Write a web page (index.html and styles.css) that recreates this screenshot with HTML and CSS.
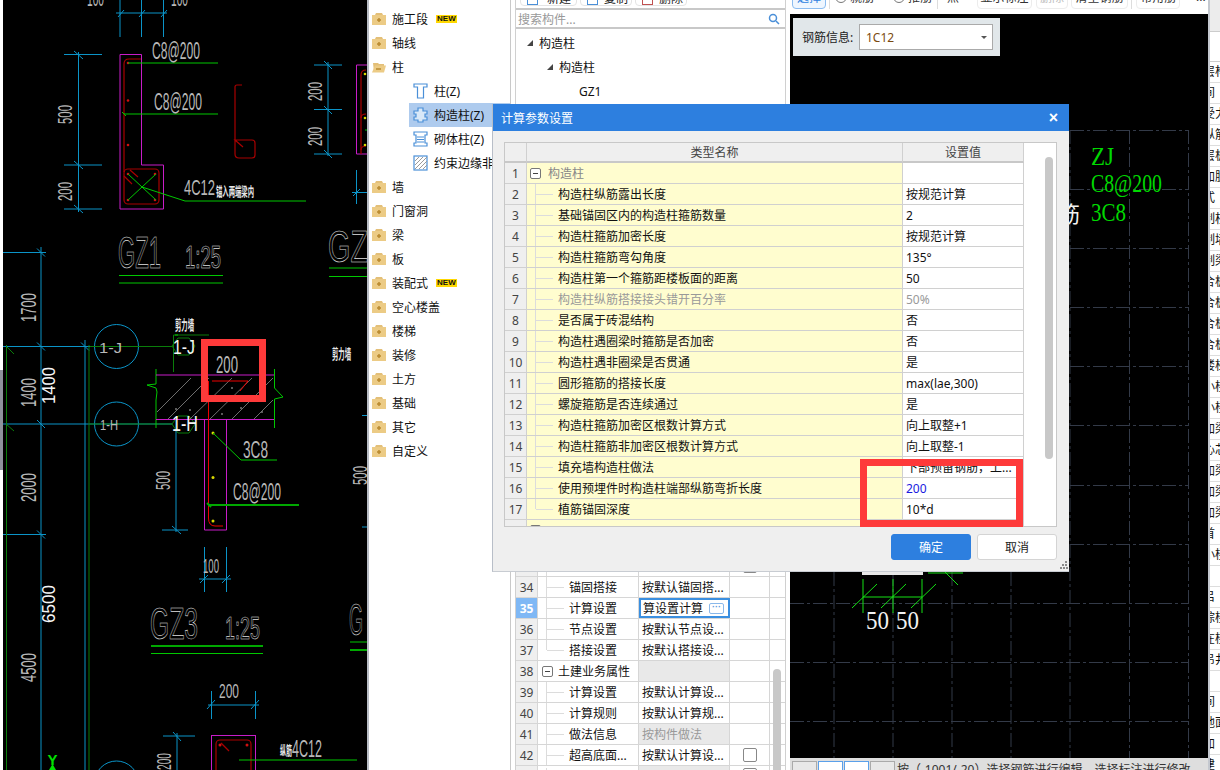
FILE: index.html
```html
<!DOCTYPE html>
<html lang="zh">
<head>
<meta charset="utf-8">
<title>计算参数设置</title>
<link rel="stylesheet" href="styles.css">
</head>
<body>
<div class="app">
  <div class="edge"><div class="edge-mark"></div></div>
  <div class="cad-left">
    <svg class="cad-svg" viewBox="3 0 364 770" width="364" height="770" xmlns="http://www.w3.org/2000/svg">
      <!-- long axis lines -->
      <g class="l-blue">
        <path d="M41 247V770M85 340V770"/>
        <path d="M3 252.500H46M3 346.500H94M3 424H172M3 534.500H46"/>
        <path d="M37 248.500L45 256.500M37 342.500L45 350.500M37 420L45 428M37 530.500L45 538.500M81 342.500L89 350.500"/>
        <circle cx="116.500" cy="346.500" r="22"/>
        <circle cx="116.500" cy="424" r="22"/>
        <circle cx="116.500" cy="783" r="22"/>
      </g>
      <path class="l-dgreen" d="M6.500 345V770M89 345V770M90 346.500H172M90 424H172M173.500 335V372M173.500 335H209"/>
      <path class="l-dgreen" d="M6 346L14 354M6 424L14 431M178 338l11 0 6 8-6 9h-11l-6-9zM178 416l11 0 6 8-6 9h-11l-6-9z"/>
      <!-- GZ1 detail -->
      <g class="l-blue">
        <path d="M120 0V37M141.500 0V37M163.500 0V37M116 13H167M118 17L124 10M139 17L145 10M161 17L167 10"/>
        <path d="M78.500 52V212M64 54.500H102M64 165H102M64 209H102M74 51L83 59M74 161L83 169M74 205L83 213"/>
        <path d="M328 62V156M314 65H342M314 109.500H342M314 154H342M324 61L332 69M324 106L332 114M324 150L332 158"/>
        <path d="M356.500 170V204M352 192.500H367M353 196L360 189"/>
      </g>
      <path class="l-mag" d="M120 54.500H141.500V165H163.500V209H120ZM367 65H356.500V154H367"/>
      <g class="l-dred">
        <path d="M124 172V64Q124 59 129 59H141"/>
        <rect x="124" y="169" width="35" height="35" rx="4"/>
        <path d="M130 170L138 177M124 176L132 184M361 154V75Q361 70 366 70"/>
        <path d="M242 85H237Q235 85 235 87V154Q235 158 239 158H252Q255 158 255 155V143Q255 140 252 140H235L243 147"/>
        <path d="M361 118Q361 114 366 114M361 150Q361 146 366 146"/>
      </g>
      <g class="dot-red">
        <circle cx="128" cy="63" r="1.300"/><circle cx="128" cy="100.500" r="1.300"/><circle cx="128" cy="145" r="1.300"/>
        <circle cx="128" cy="174" r="1.300"/><circle cx="155" cy="174" r="1.300"/><circle cx="128" cy="200" r="1.300"/><circle cx="155" cy="200" r="1.300"/>
      </g>
      <path class="l-green" d="M128 63H218M124 114H218M122 112L126 116M128 174L156 200M156 174L128 200M142 187L185 201H306"/>
      <path class="l-green" d="M119 275.500H223M119 283H223M329 268H367M329 276.500H367M365 130H367M175 335H178"/>
      <g class="dot-yel"><circle cx="365" cy="74" r="1.300"/><circle cx="365" cy="118" r="1.300"/><circle cx="365" cy="145" r="1.300"/></g>
      <!-- wall -->
      <g class="l-hatch">
        <path d="M157 412L191 378M168 419L209 378M190 419L232 378M210 419L252 378M232 419L273 378M254 419L273 400"/>
      </g>
      <g class="dot-gray">
        <circle cx="176" cy="409" r="1"/><circle cx="190" cy="410" r="1"/><circle cx="232" cy="388" r="1"/><circle cx="241" cy="408" r="1"/><circle cx="255" cy="396" r="1"/><circle cx="222" cy="414" r="1"/><circle cx="262" cy="412" r="1"/>
      </g>
      <path class="l-green" d="M156 369V384L147 385 156 388 157 392 156 400V428M274.500 369V388L283 397 274.500 399V428"/>
      <path class="l-mag" d="M156 375H274M156 419.500H274"/>
      <path class="l-red" d="M208.500 381V518Q208.500 526 215 526H223M212 381H248L240 391"/>
      <path class="l-mag2" d="M204.500 420V530H226.500V420"/>
      <g class="dot-yel"><circle cx="213" cy="433" r="1.500"/><circle cx="213" cy="477.500" r="1.500"/><circle cx="213" cy="521" r="1.500"/></g>
      <path class="l-green" d="M213 433L241 460H277"/>
      <path class="l-green2" d="M208 505H299M207 503L211 507"/>
      <g class="l-blue">
        <path d="M176 420V532M162 530H188M172 526L181 534"/>
        <path d="M204.500 547V592M226.500 547V592M199 579H231M200 583L208 575M222 583L230 575"/>
        <path d="M211.500 691V719M255.500 691V719M208 705H259M207 709L215 700M251 709L259 700"/>
        <path d="M177 733V770M163 736H195M173 732L181 741"/>
        <path d="M362 415.500H367M362 527H367"/>
      </g>
      <path class="l-green2" d="M151 646H263"/>
      <path class="l-green" d="M151 653.500H263M350 642H367"/>
      <path class="l-green2" d="M350 650H367"/>
      <rect class="l-mag" x="211.500" y="735.500" width="44" height="50"/>
      <g class="l-dred">
        <rect x="216" y="740" width="35" height="40" rx="4"/>
        <path d="M221 743L229 751"/>
      </g>
      <g class="dot-red"><circle cx="220" cy="745" r="1.500"/><circle cx="247" cy="745" r="1.500"/></g>
      <path class="l-green" d="M239 760H357"/>
      <!-- texts -->
      <g class="cad-text">
        <text x="87" y="6" font-size="22" textLength="17" lengthAdjust="spacingAndGlyphs">100</text>
        <text x="171" y="6" font-size="22" textLength="17" lengthAdjust="spacingAndGlyphs">100</text>
        <text x="152" y="59" font-size="23" textLength="48" lengthAdjust="spacingAndGlyphs">C8@200</text>
        <text x="154" y="110" font-size="23" textLength="48" lengthAdjust="spacingAndGlyphs">C8@200</text>
        <text x="184" y="195" font-size="22" textLength="31" lengthAdjust="spacingAndGlyphs">4C12</text>
        <text x="72" y="124" transform="rotate(-90 72 124)" font-size="21" textLength="19" lengthAdjust="spacingAndGlyphs">500</text>
        <text x="72" y="201" transform="rotate(-90 72 201)" font-size="21" textLength="19" lengthAdjust="spacingAndGlyphs">200</text>
        <text x="322" y="101" transform="rotate(-90 322 101)" font-size="21" textLength="19" lengthAdjust="spacingAndGlyphs">200</text>
        <text x="322" y="146" transform="rotate(-90 322 146)" font-size="21" textLength="19" lengthAdjust="spacingAndGlyphs">200</text>
        <text class="hollow" x="118" y="268" font-size="44" textLength="43" lengthAdjust="spacingAndGlyphs">GZ1</text>
        <text class="hollow" x="185" y="268" font-size="32" textLength="36" lengthAdjust="spacingAndGlyphs">1:25</text>
        <text class="hollow" x="328" y="262" font-size="44" textLength="40" lengthAdjust="spacingAndGlyphs">GZ</text>
        <text x="36" y="322" transform="rotate(-90 36 322)" font-size="22" textLength="29" lengthAdjust="spacingAndGlyphs">1700</text>
        <text x="36" y="407" transform="rotate(-90 36 407)" font-size="22" textLength="29" lengthAdjust="spacingAndGlyphs">1400</text>
        <text x="36" y="502" transform="rotate(-90 36 502)" font-size="22" textLength="29" lengthAdjust="spacingAndGlyphs">2000</text>
        <text x="36" y="682" transform="rotate(-90 36 682)" font-size="22" textLength="29" lengthAdjust="spacingAndGlyphs">4500</text>
        <text class="strong" x="55" y="404" transform="rotate(-90 55 404)" font-size="19" textLength="37" lengthAdjust="spacingAndGlyphs">1400</text>
        <text class="strong" x="55" y="623" transform="rotate(-90 55 623)" font-size="19" textLength="38" lengthAdjust="spacingAndGlyphs">6500</text>
        <text x="99" y="353" font-size="15" textLength="23" lengthAdjust="spacingAndGlyphs">1-J</text>
        <text class="strong" x="173" y="354" font-size="20" textLength="22" lengthAdjust="spacingAndGlyphs">1-J</text>
        <text x="216" y="373" font-size="24" textLength="22" lengthAdjust="spacingAndGlyphs">200</text>
        <text x="100" y="430" font-size="14" textLength="18" lengthAdjust="spacingAndGlyphs">1-H</text>
        <text class="strong" x="172" y="431" font-size="22" textLength="26" lengthAdjust="spacingAndGlyphs">1-H</text>
        <text x="170" y="490" transform="rotate(-90 170 490)" font-size="21" textLength="19" lengthAdjust="spacingAndGlyphs">500</text>
        <text x="243" y="458" font-size="24" textLength="25" lengthAdjust="spacingAndGlyphs">3C8</text>
        <text x="233" y="500" font-size="23" textLength="48" lengthAdjust="spacingAndGlyphs">C8@200</text>
        <text x="203" y="573" font-size="21" textLength="16" lengthAdjust="spacingAndGlyphs">100</text>
        <text class="hollow" x="150" y="639" font-size="44" textLength="48" lengthAdjust="spacingAndGlyphs">GZ3</text>
        <text class="hollow" x="225" y="639" font-size="32" textLength="35" lengthAdjust="spacingAndGlyphs">1:25</text>
        <text x="219" y="698" font-size="21" textLength="20" lengthAdjust="spacingAndGlyphs">200</text>
        <text x="292" y="757" font-size="24" textLength="30" lengthAdjust="spacingAndGlyphs">4C12</text>
        <text x="367" y="485" transform="rotate(-90 367 485)" font-size="21" textLength="19" lengthAdjust="spacingAndGlyphs">500</text>
        <text x="171" y="770" transform="rotate(-90 171 770)" font-size="21" textLength="17" lengthAdjust="spacingAndGlyphs">200</text>
        <text class="hollow" x="349" y="635" font-size="44" textLength="14" lengthAdjust="spacingAndGlyphs">G</text>
      </g>
      <g class="cad-cjk">
        <text x="216" y="196" font-size="13" textLength="38" lengthAdjust="spacingAndGlyphs">锚入两端梁内</text>
        <text x="175" y="330" font-size="14" textLength="19" lengthAdjust="spacingAndGlyphs">剪力墙</text>
        <text x="332" y="359" font-size="14" textLength="19" lengthAdjust="spacingAndGlyphs">剪力墙</text>
        <text x="280" y="755" font-size="13" textLength="12" lengthAdjust="spacingAndGlyphs">纵筋</text>
      </g>
      <rect class="hl" x="204.500" y="342.500" width="58" height="56"/>
      <text class="axis-y" x="47.500" y="765" font-size="15">Y</text>
      <path class="axis-arrow" d="M52.500 764L56 770H49Z"/>
    </svg>
  </div>

  <aside class="tree">
    <div class="tree-row"><svg class="folder" viewBox="0 0 14 12"><path class="f-tab" d="M4 0h6l1 2H3z"/><rect class="f-body" y="2" width="14" height="10"/><path class="f-plus" d="M5 7h4M7 5v4"/></svg><span>施工段</span><span class="new">NEW</span></div>
    <div class="tree-row"><svg class="folder" viewBox="0 0 14 12"><path class="f-tab" d="M4 0h6l1 2H3z"/><rect class="f-body" y="2" width="14" height="10"/><path class="f-plus" d="M5 7h4M7 5v4"/></svg><span>轴线</span></div>
    <div class="tree-row"><svg class="folder" viewBox="0 0 14 12"><path class="f-open" d="M1 2h5l1 1h5v2H4l-2 6z"/><path class="f-body" d="M3 4.500h11l-2 7H0z"/><path class="f-plus" d="M4 8h5"/></svg><span>柱</span></div>
    <div class="tree-row child"><svg class="cicon" viewBox="0 0 15 16"><path class="c-line" d="M1 1h13v3h-3.500v11h-6V4H1z"/></svg><span>柱(Z)</span></div>
    <div class="tree-row child selected"><svg class="cicon" viewBox="0 0 15 16"><path class="c-line2" d="M5 1h5v3h4v3h-2v3h2v3h-4v2H5v-2H1v-3h2V7H1V4h4z"/></svg><span>构造柱(Z)</span></div>
    <div class="tree-row child"><svg class="cicon" viewBox="0 0 15 16"><path class="c-line" d="M1 1h13v3h-2v8h2v3H1v-3h2V4H1z"/><path class="c-line" d="M4 6h7M4 8.500h7M4 11h7"/></svg><span>砌体柱(Z)</span></div>
    <div class="tree-row child"><svg class="cicon" viewBox="0 0 15 16"><rect class="c-box" x="1" y="1" width="13" height="14"/><path class="c-hatch" d="M2 6L6 2M2 10L10 2M2 14L14 2M6 14L14 6M10 14L14 10"/></svg><span>约束边缘非</span></div>
    <div class="tree-row"><svg class="folder" viewBox="0 0 14 12"><path class="f-tab" d="M4 0h6l1 2H3z"/><rect class="f-body" y="2" width="14" height="10"/><path class="f-plus" d="M5 7h4M7 5v4"/></svg><span>墙</span></div>
    <div class="tree-row"><svg class="folder" viewBox="0 0 14 12"><path class="f-tab" d="M4 0h6l1 2H3z"/><rect class="f-body" y="2" width="14" height="10"/><path class="f-plus" d="M5 7h4M7 5v4"/></svg><span>门窗洞</span></div>
    <div class="tree-row"><svg class="folder" viewBox="0 0 14 12"><path class="f-tab" d="M4 0h6l1 2H3z"/><rect class="f-body" y="2" width="14" height="10"/><path class="f-plus" d="M5 7h4M7 5v4"/></svg><span>梁</span></div>
    <div class="tree-row"><svg class="folder" viewBox="0 0 14 12"><path class="f-tab" d="M4 0h6l1 2H3z"/><rect class="f-body" y="2" width="14" height="10"/><path class="f-plus" d="M5 7h4M7 5v4"/></svg><span>板</span></div>
    <div class="tree-row"><svg class="folder" viewBox="0 0 14 12"><path class="f-tab" d="M4 0h6l1 2H3z"/><rect class="f-body" y="2" width="14" height="10"/><path class="f-plus" d="M5 7h4M7 5v4"/></svg><span>装配式</span><span class="new">NEW</span></div>
    <div class="tree-row"><svg class="folder" viewBox="0 0 14 12"><path class="f-tab" d="M4 0h6l1 2H3z"/><rect class="f-body" y="2" width="14" height="10"/><path class="f-plus" d="M5 7h4M7 5v4"/></svg><span>空心楼盖</span></div>
    <div class="tree-row"><svg class="folder" viewBox="0 0 14 12"><path class="f-tab" d="M4 0h6l1 2H3z"/><rect class="f-body" y="2" width="14" height="10"/><path class="f-plus" d="M5 7h4M7 5v4"/></svg><span>楼梯</span></div>
    <div class="tree-row"><svg class="folder" viewBox="0 0 14 12"><path class="f-tab" d="M4 0h6l1 2H3z"/><rect class="f-body" y="2" width="14" height="10"/><path class="f-plus" d="M5 7h4M7 5v4"/></svg><span>装修</span></div>
    <div class="tree-row"><svg class="folder" viewBox="0 0 14 12"><path class="f-tab" d="M4 0h6l1 2H3z"/><rect class="f-body" y="2" width="14" height="10"/><path class="f-plus" d="M5 7h4M7 5v4"/></svg><span>土方</span></div>
    <div class="tree-row"><svg class="folder" viewBox="0 0 14 12"><path class="f-tab" d="M4 0h6l1 2H3z"/><rect class="f-body" y="2" width="14" height="10"/><path class="f-plus" d="M5 7h4M7 5v4"/></svg><span>基础</span></div>
    <div class="tree-row"><svg class="folder" viewBox="0 0 14 12"><path class="f-tab" d="M4 0h6l1 2H3z"/><rect class="f-body" y="2" width="14" height="10"/><path class="f-plus" d="M5 7h4M7 5v4"/></svg><span>其它</span></div>
    <div class="tree-row"><svg class="folder" viewBox="0 0 14 12"><path class="f-tab" d="M4 0h6l1 2H3z"/><rect class="f-body" y="2" width="14" height="10"/><path class="f-plus" d="M5 7h4M7 5v4"/></svg><span>自定义</span></div>
  </aside>

  <section class="mid">
    <div class="mid-tools">
      <span class="mid-btn first"><i class="mid-ico"></i>新建</span>
      <span class="mid-btn"><i class="mid-ico"></i>复制</span>
      <span class="mid-btn"><i class="mid-ico red"></i>删除</span>
    </div>
    <div class="search">
      <span>搜索构件...</span>
      <svg class="glass" viewBox="0 0 12 12"><circle cx="5" cy="5" r="3.500"/><path d="M8 8l3 3"/></svg>
    </div>
    <div class="comp-tree">
      <div class="comp-row"><i class="tri"></i>构造柱</div>
      <div class="comp-row lv2"><i class="tri"></i>构造柱</div>
      <div class="comp-row lv3">GZ1</div>
    </div>
    <div class="props">
      <div class="p-row"><span class="p-no">33</span><span class="p-name"><i class="tv"></i><i class="th"></i>钢筋业务</span><span class="p-val">按默认计算设...</span><span class="p-chk"><i class="chk"></i></span></div>
      <div class="p-row"><span class="p-no">34</span><span class="p-name"><i class="tv"></i><i class="th"></i>锚固搭接</span><span class="p-val">按默认锚固搭...</span><span class="p-chk"></span></div>
      <div class="p-row"><span class="p-no active">35</span><span class="p-name"><i class="tv"></i><i class="th"></i>计算设置</span><span class="p-val edit">算设置计算<i class="more">···</i></span><span class="p-chk"></span></div>
      <div class="p-row"><span class="p-no">36</span><span class="p-name"><i class="tv"></i><i class="th"></i>节点设置</span><span class="p-val">按默认节点设...</span><span class="p-chk"></span></div>
      <div class="p-row"><span class="p-no">37</span><span class="p-name"><i class="tv end"></i><i class="th"></i>搭接设置</span><span class="p-val">按默认搭接设...</span><span class="p-chk"></span></div>
      <div class="p-row"><span class="p-no">38</span><span class="p-name group"><i class="minus"></i>土建业务属性</span><span class="p-val gray"></span><span class="p-chk"></span></div>
      <div class="p-row"><span class="p-no">39</span><span class="p-name"><i class="tv"></i><i class="th"></i>计算设置</span><span class="p-val">按默认计算设...</span><span class="p-chk"></span></div>
      <div class="p-row"><span class="p-no">40</span><span class="p-name"><i class="tv"></i><i class="th"></i>计算规则</span><span class="p-val">按默认计算规...</span><span class="p-chk"></span></div>
      <div class="p-row"><span class="p-no">41</span><span class="p-name"><i class="tv"></i><i class="th"></i>做法信息</span><span class="p-val gray muted">按构件做法</span><span class="p-chk"></span></div>
      <div class="p-row"><span class="p-no">42</span><span class="p-name"><i class="tv"></i><i class="th"></i>超高底面...</span><span class="p-val">按默认计算设...</span><span class="p-chk"><i class="chk"></i></span></div>
      <div class="p-row last"><span class="p-no"></span><span class="p-name"><i class="tv"></i></span><span class="p-val gray"></span><span class="p-chk"><i class="chk"></i></span></div>
      <i class="p-scroll"></i>
    </div>
  </section>

  <section class="right">
    <div class="r-tools">
      <span class="rb primary">选择</span>
      <i class="vsep"></i>
      <span class="radio a"><i></i>就筋</span>
      <span class="radio b"><i></i>推筋</span>
      <i class="vsep"></i>
      <span class="rb input">点</span>
      <span class="rb wide">显示标注</span>
      <span class="rb off">删除</span>
      <span class="rb clear">清空钢筋</span>
      <i class="vsep"></i>
      <span class="rb corner">布角筋</span>
      <span class="dots">···</span>
    </div>
    <div class="canvas">
      <svg class="grid-svg" viewBox="790 14 418 744" width="418" height="744" xmlns="http://www.w3.org/2000/svg">
        <path class="grid" d="M1070 130V758M1129.500 130V758M1188.500 130V758M834 572V758M893 572V758M952 572V758M1011 572V758"/>
        <path class="grid" d="M1070 130.500H1189M1070 189.500H1189M1070 248.500H1189M1070 307.500H1189M1070 366.500H1189M1070 425.500H1189M1070 485.500H1189M1070 544.500H1189M790 603.500H1189M790 662.500H1189M790 721.500H1189"/>
        <text class="green-t" x="1091" y="165" font-size="25" textLength="23" lengthAdjust="spacingAndGlyphs">ZJ</text>
        <text class="green-t" x="1091" y="192" font-size="25" textLength="71" lengthAdjust="spacingAndGlyphs">C8@200</text>
        <text class="green-t" x="1091" y="221" font-size="25" textLength="35" lengthAdjust="spacingAndGlyphs">3C8</text>
        <text class="white-cjk" x="1058" y="222" font-size="22">筋</text>
        <text class="white-t" x="866" y="629" font-size="25" textLength="23" lengthAdjust="spacingAndGlyphs">50</text>
        <text class="white-t" x="896" y="629" font-size="25" textLength="23" lengthAdjust="spacingAndGlyphs">50</text>
        <path class="l-bright" d="M863 579V613M893 579V613M922 579V613M863 597H922M852 608L877 584M881 608L906 584M911 608L936 584M928 573H963M945 572L958 585"/>
        <rect class="stub" x="862" y="570" width="61" height="5"/>
      </svg>
      <div class="rebar-info">
        <span>钢筋信息:</span>
        <div class="select"><span>1C12</span><i class="caret"></i></div>
      </div>
    </div>
    <div class="status">
      <span class="st-btn"></span><span class="st-btn on"></span><span class="st-btn on"></span><span class="st-btn"></span>
      <span class="st-text">按（-1001/-20）选择钢筋进行编辑，选择标注进行修改</span>
    </div>
  </section>

  <aside class="side">
    <div class="side-top"></div>
    <div class="side-gap"></div>
    <div class="s-row">层构</div><div class="s-row">间</div><div class="s-row">受力</div><div class="s-row">纵筋</div><div class="s-row">层板</div><div class="s-row">加脱</div><div class="s-row">式</div><div class="s-row">制柱</div><div class="s-row">制墙</div><div class="s-row">制梁</div><div class="s-row">合板</div><div class="s-row">合板</div><div class="s-row">合板</div><div class="s-row">合板</div><div class="s-row">楼梯</div><div class="s-row">小楼</div><div class="s-row">小楼</div><div class="s-row">加梁</div><div class="s-row">心芯</div><div class="s-row">加梁</div><div class="s-row">加梁</div><div class="s-row">加梁</div><div class="s-row">首</div><div class="s-row">小楼</div><div class="s-row"></div><div class="s-row">吕</div><div class="s-row">综楼</div><div class="s-row">在楼</div><div class="s-row">吊井</div><div class="s-row"></div><div class="s-row">间</div><div class="s-row">地面</div><div class="s-row">加</div><div class="s-row">建</div>
  </aside>

  <div class="dialog">
    <header class="dlg-head"><span>计算参数设置</span><span class="dlg-x">×</span></header>
    <div class="dlg-table">
      <i class="dlg-scroll"></i>
      <div class="d-row head"><span class="d-no"></span><span class="d-name">类型名称</span><span class="d-val">设置值</span></div>
      <div class="d-row"><span class="d-no">1</span><span class="d-name group"><i class="minus"></i>构造柱</span><span class="d-val"></span></div>
      <div class="d-row"><span class="d-no">2</span><span class="d-name"><i class="tv"></i><i class="th"></i>构造柱纵筋露出长度</span><span class="d-val">按规范计算</span></div>
      <div class="d-row"><span class="d-no">3</span><span class="d-name"><i class="tv"></i><i class="th"></i>基础锚固区内的构造柱箍筋数量</span><span class="d-val">2</span></div>
      <div class="d-row"><span class="d-no">4</span><span class="d-name"><i class="tv"></i><i class="th"></i>构造柱箍筋加密长度</span><span class="d-val">按规范计算</span></div>
      <div class="d-row"><span class="d-no">5</span><span class="d-name"><i class="tv"></i><i class="th"></i>构造柱箍筋弯勾角度</span><span class="d-val">135°</span></div>
      <div class="d-row"><span class="d-no">6</span><span class="d-name"><i class="tv"></i><i class="th"></i>构造柱第一个箍筋距楼板面的距离</span><span class="d-val">50</span></div>
      <div class="d-row dim"><span class="d-no">7</span><span class="d-name"><i class="tv"></i><i class="th"></i>构造柱纵筋搭接接头错开百分率</span><span class="d-val">50%</span></div>
      <div class="d-row"><span class="d-no">8</span><span class="d-name"><i class="tv"></i><i class="th"></i>是否属于砖混结构</span><span class="d-val">否</span></div>
      <div class="d-row"><span class="d-no">9</span><span class="d-name"><i class="tv"></i><i class="th"></i>构造柱遇圈梁时箍筋是否加密</span><span class="d-val">否</span></div>
      <div class="d-row"><span class="d-no">10</span><span class="d-name"><i class="tv"></i><i class="th"></i>构造柱遇非圈梁是否贯通</span><span class="d-val">是</span></div>
      <div class="d-row"><span class="d-no">11</span><span class="d-name"><i class="tv"></i><i class="th"></i>圆形箍筋的搭接长度</span><span class="d-val">max(lae,300)</span></div>
      <div class="d-row"><span class="d-no">12</span><span class="d-name"><i class="tv"></i><i class="th"></i>螺旋箍筋是否连续通过</span><span class="d-val">是</span></div>
      <div class="d-row"><span class="d-no">13</span><span class="d-name"><i class="tv"></i><i class="th"></i>构造柱箍筋加密区根数计算方式</span><span class="d-val">向上取整+1</span></div>
      <div class="d-row"><span class="d-no">14</span><span class="d-name"><i class="tv"></i><i class="th"></i>构造柱箍筋非加密区根数计算方式</span><span class="d-val">向上取整-1</span></div>
      <div class="d-row"><span class="d-no">15</span><span class="d-name"><i class="tv"></i><i class="th"></i>填充墙构造柱做法</span><span class="d-val">下部预留钢筋，上...</span></div>
      <div class="d-row"><span class="d-no">16</span><span class="d-name"><i class="tv"></i><i class="th"></i>使用预埋件时构造柱端部纵筋弯折长度</span><span class="d-val blue">200</span></div>
      <div class="d-row"><span class="d-no">17</span><span class="d-name"><i class="tv end"></i><i class="th"></i>植筋锚固深度</span><span class="d-val">10*d</span></div>
      <div class="d-row"><span class="d-no"></span><span class="d-name group"><i class="minus"></i></span><span class="d-val"></span></div>
    </div>
    <div class="dlg-foot">
      <button class="btn ok">确定</button>
      <button class="btn">取消</button>
    </div>
    <svg class="grip" viewBox="0 0 8 8"><path d="M5 0h2v2H5zM2 3h2v2H2zM5 3h2v2H5zM0 6h2v2H0zM3 6h2v2H3zM6 6h2v2H6z"/></svg>
    <div class="callout"></div>
  </div>
</div>
</body>
</html>
```

FILE: styles.css
```css
* { box-sizing: border-box; }
html, body { margin: 0; height: 100%; overflow: hidden; }
body {
  font-family: "Noto Sans", "Noto Sans CJK SC", sans-serif;
  font-size: 12px;
  color: #111;
  background: #fff;
}
i { display: block; font-style: normal; }
.app { position: relative; display: flex; width: 1220px; height: 770px; overflow: hidden; }

/* left CAD drawing */
.edge { width: 3px; height: 770px; background: #fff; padding-top: 370px; flex: none; }
.edge-mark { height: 100px; background: #8e939c; }
.cad-left { width: 364px; height: 770px; background: #000; flex: none; overflow: hidden; }
.cad-svg { display: block; }
.cad-svg path, .cad-svg circle, .cad-svg rect { fill: none; }
.l-blue path, .l-blue circle { stroke: #0b94c8; stroke-width: 1; }
.l-dgreen { stroke: #0a7d0a; stroke-width: 1; }
.l-green { stroke: #00c800; stroke-width: 1; }
.l-green2 { stroke: #00a800; stroke-width: 2; }
.l-mag { stroke: #c81cc8; stroke-width: 1; }
.l-mag2 { stroke: #c81cc8; stroke-width: 1; }
.l-red { stroke: #ee0000; stroke-width: 1; }
.l-dred path, .l-dred rect { stroke: #a80000; stroke-width: 1.2; }
.l-hatch path { stroke: #8a8a8a; stroke-width: .8; }
.cad-svg .dot-red circle { fill: #d01010; }
.cad-svg .dot-yel circle { fill: #d8d800; }
.cad-svg .dot-gray circle { fill: #777; }
.cad-text text { font-family: "Liberation Sans", sans-serif; fill: #b8b8b8; font-weight: 400; }
.cad-text .strong { fill: #f5f5f5; }
.cad-text .hollow { fill: #000; stroke: #e0e0e0; stroke-width: .6; }
.cad-cjk text { font-family: "Noto Sans CJK SC", sans-serif; fill: #e8e8e8; font-weight: 700; }
.cad-svg .hl { stroke: #fe3a3a; stroke-width: 7; }
.axis-y { fill: #00e000; font-family: "Liberation Sans", sans-serif; font-weight: 700; }
.cad-svg .axis-arrow { fill: #00e000; }

/* element tree */
.tree {
  width: 144px; height: 770px; flex: none;
  padding-top: 7px;
  border-left: 2px solid #b8bcc4;
  border-right: 1px solid #c9c9c9;
  overflow: hidden;
}
.tree-row { display: flex; align-items: center; height: 24px; padding-left: 3px; white-space: nowrap; }
.tree-row.child { padding-left: 44px; }
.tree-row.selected { margin-left: 40px; padding-left: 4px; background: #aecbee; }
.folder { width: 14px; height: 12px; margin-right: 6px; flex: none; }
.f-tab { fill: #e3bf78; }
.f-body { fill: #eccb85; }
.f-open { fill: #e3bf78; }
.f-plus { stroke: #b98a2f; stroke-width: 1.500; fill: none; }
.cicon { width: 15px; height: 16px; margin-right: 6px; flex: none; }
.c-line { fill: none; stroke: #4a8fd8; stroke-width: 1.200; }
.c-line2 { fill: #d8e8f8; stroke: #4a8fd8; stroke-width: 1.200; }
.c-box { fill: #fff; stroke: #4a8fd8; stroke-width: 1.200; }
.c-hatch { fill: none; stroke: #9a9a9a; stroke-width: 1; }
.new {
  margin-left: 8px; padding: 0 1px; height: 8px;
  background: #ffd800; color: #111;
  font: 700 8px/8px "Liberation Sans", sans-serif;
}

/* middle column */
.mid {
  width: 271px; height: 770px; margin-left: 4px; flex: none;
  display: flex; flex-direction: column;
  border-left: 1px solid #d0d0d0;
  border-right: 1px solid #d0d0d0;
}
.mid-tools { height: 8px; flex: none; display: flex; align-items: flex-end; gap: 3px; padding: 0 0 2px 4px; overflow: hidden; }
.mid-btn { flex: none; width: 52px; display: flex; align-items: center; gap: 6px; height: 16px; padding: 0 6px; border: 1px solid #e4e4e4; border-radius: 4px; color: #222; white-space: nowrap; }
.mid-btn.first { width: 57px; gap: 9px; }
.mid-ico { width: 11px; height: 13px; border: 1px solid #4a8fd8; flex: none; }
.mid-ico.red { border-color: #c05050; }
.search {
  height: 21px; flex: none; display: flex; align-items: center; justify-content: space-between;
  padding: 0 5px 0 2px;
  border-top: 2px solid #c8c8c8; border-bottom: 2px solid #c8c8c8;
  color: #999; font-size: 12px;
}
.glass { width: 12px; height: 12px; }
.glass circle, .glass path { fill: none; stroke: #4a8fd8; stroke-width: 1.500; }
.comp-tree { flex: 1; padding-top: 2px; }
.comp-row { display: flex; align-items: center; height: 24px; padding-left: 11px; white-space: nowrap; gap: 6px; }
.comp-row.lv2 { padding-left: 31px; }
.comp-row.lv3 { padding-left: 63px; }
.tri { width: 0; height: 0; border-left: 6px solid transparent; border-bottom: 6px solid #444; }
.props { position: relative; flex: none; height: 214px; overflow: hidden; }
.p-row {
  display: grid; grid-template-columns: 22px 101px 91px 40px;
  height: 21px;
  border-bottom: 1px solid #d6d6d6;
}
.p-row > span { display: flex; align-items: center; white-space: nowrap; overflow: hidden; border-right: 1px solid #d6d6d6; }
.p-row.last > span { align-items: flex-start; padding-top: 2px; }
.p-no { justify-content: center; background: #efefef; color: #444; }
.p-no.active { background: #7fb8f5; color: #fff; font-weight: 700; }
.p-name { padding-left: 8px; }
.p-name.group { padding-left: 4px; gap: 5px; }
.p-val { padding-left: 3px; }
.p-val.gray { background: #e9e9e9; }
.p-val.muted { color: #999; }
.p-val.edit { border: 2px solid #3b8fe0; padding-left: 2px; gap: 6px; }
.p-chk { justify-content: center; }
.more { width: 15px; height: 11px; border: 1px solid #8ab8ea; border-radius: 2px; color: #5c9be0; font: 700 9px/7px "Liberation Sans", sans-serif; text-align: center; }
.chk { width: 14px; height: 14px; border: 1px solid #888; border-radius: 2px; background: #fff; }
.p-scroll { position: absolute; right: 4px; top: 113px; width: 8px; height: 110px; border-radius: 4px 4px 0 0; background: #c8c8c8; }
.tv { width: 1px; height: 100%; background: #dcdcdc; flex: none; }
.tv.end { height: 50%; align-self: flex-start; }
.th { width: 17px; height: 1px; background: #dcdcdc; margin-right: 5px; flex: none; }
.minus { position: relative; width: 11px; height: 11px; border: 1px solid #777; border-radius: 2px; flex: none; background: #fff; }
.minus::after { content: ""; position: absolute; left: 2px; top: 4px; width: 5px; height: 1px; background: #444; }

/* right drawing */
.right { width: 418px; height: 770px; margin-left: 4px; flex: none; display: flex; flex-direction: column; }
.r-tools {
  height: 14px; flex: none; display: flex; align-items: flex-end; overflow: hidden;
  padding: 0 0 5px 2px; background: #fff; color: #333;
}
.rb { flex: none; height: 24px; padding: 0; display: flex; align-items: center; justify-content: center; white-space: nowrap; border: 1px solid #ececec; border-radius: 4px; }
.rb.primary { width: 34px; border-color: #8bbcf0; color: #2d7fdf; background: #eef6ff; }
.rb.input { width: 24px; border: 0; }
.rb.wide { width: 55px; margin-left: 12px; }
.rb.off { width: 32px; color: #bbb; margin-left: 4px; }
.rb.clear { width: 57px; margin-left: 3px; }
.rb.corner { width: 44px; margin-left: 1px; }
.vsep { width: 1px; height: 24px; background: #ddd; margin: 0 3px; flex: none; }
.radio { flex: none; display: flex; align-items: center; gap: 3px; height: 24px; white-space: nowrap; }
.radio.a { margin: 0 19px 0 2px; }
.radio.b { margin-right: 2px; }
.radio i { width: 12px; height: 12px; border: 1px solid #777; border-radius: 50%; }
.dots { margin-left: 16px; }
.canvas { position: relative; flex: 1; background: #000; overflow: hidden; }
.grid-svg { display: block; }
.grid { stroke: #333a48; stroke-width: 1; stroke-dasharray: 14 3 3 3; fill: none; }
.green-t { font-family: "Liberation Serif", serif; fill: #00d800; }
.white-t { font-family: "Liberation Serif", serif; fill: #f2f2f2; }
.white-cjk { font-family: "Noto Sans CJK SC", sans-serif; fill: #f2f2f2; }
.l-bright { stroke: #14e014; stroke-width: 1; fill: none; }
.stub { fill: #e8e8e8; }
.rebar-info {
  position: absolute; left: 3px; top: 4px;
  width: 207px; height: 38px;
  display: flex; align-items: center; justify-content: space-between;
  padding: 0 7px 0 9px;
  background: #e1e7ea; color: #222;
}
.select { width: 134px; height: 26px; display: flex; align-items: center; justify-content: space-between; padding: 0 5px 0 6px; background: #fff; border: 1px solid #aaa; color: #7a4a10; }
.caret { width: 0; height: 0; border-left: 3px solid transparent; border-right: 3px solid transparent; border-top: 3px solid #555; }
.status { height: 12px; flex: none; display: flex; gap: 1px; padding-left: 2px; background: #dedede; overflow: hidden; }
.st-btn { width: 25px; height: 20px; margin-top: 3px; flex: none; border: 1px solid #aaa; background: #e8e8e8; }
.st-btn.on { background: #fff; border-color: #5aa0ea; }
.st-text { margin: 3px 0 0 1px; line-height: 18px; white-space: nowrap; color: #333; }

/* far right list */
.side { width: 12px; height: 770px; flex: none; border-left: 2px solid #c4c8cf; overflow: hidden; }
.side-top { height: 32px; background: #ececec; border-bottom: 1px solid #ccc; }
.side-gap { height: 30px; border-bottom: 1px solid #ccc; }
.s-row { width: 40px; height: 21px; margin-left: -7px; padding-top: 1px; line-height: 18px; border-bottom: 1px solid #ddd; white-space: nowrap; }

/* modal */
.dialog {
  position: absolute; left: 492px; top: 104px;
  width: 577px; height: 468px;
  display: flex; flex-direction: column;
  padding: 0 12px 0 11px;
  background: #efefef;
  border-left: 1px solid #b8bec8;
  border-bottom: 1px solid #c8ccd2;
}
.dlg-head {
  height: 27px; flex: none; margin: 0 -12px 0 -11px; padding: 0 11px 0 8px;
  display: flex; align-items: center; justify-content: space-between;
  background: #2d7fdf; color: #fff;
}
.dlg-x { font: 700 16px/16px "Liberation Sans", sans-serif; }
.dlg-table {
  position: relative; height: 385px; width: 553px; margin-top: 11px; flex: none;
  background: #fff; border: 1px solid #c8c8c8; overflow: hidden;
}
.dlg-scroll { position: absolute; right: 3px; top: 14px; width: 8px; height: 302px; border-radius: 4px; background: #c8c8c8; }
.d-row { display: grid; grid-template-columns: 22px 376px 121px; width: 519px; height: 21px; }
.d-row.head { height: 20px; }
.d-row > span { display: flex; align-items: center; white-space: nowrap; overflow: hidden; border-right: 1px solid #d0d0d0; border-bottom: 1px solid #d0d0d0; }
.d-no { justify-content: center; background: #efefef; color: #444; }
.d-name { padding-left: 8px; background: #fffdcf; }
.d-name.group { padding-left: 3px; gap: 7px; color: #888; }
.d-val { padding-left: 3px; background: #fff; }
.head .d-name, .head .d-val { justify-content: center; background: #efefef; color: #444; padding: 0; }
.head > span { border-bottom: 2px solid #c8c8c8; }
.dim { color: #999; }
.blue { color: #1a1ae0; }
.dlg-foot { display: flex; justify-content: flex-end; gap: 6px; padding-top: 7px; flex: none; }
.btn {
  width: 80px; height: 26px; padding: 0;
  font: inherit; color: #222; background: #fff;
  border: 1px solid #d4d4d4; border-radius: 3px;
}
.btn.ok { background: #2d7fdf; border-color: #2d7fdf; color: #fff; }
.grip { position: absolute; right: 1px; bottom: 2px; width: 8px; height: 8px; }
.grip path { fill: #8a8a8a; }
.callout { position: absolute; left: 367px; top: 355px; width: 163px; height: 68px; border: 7px solid #fe3a3a; }
```
